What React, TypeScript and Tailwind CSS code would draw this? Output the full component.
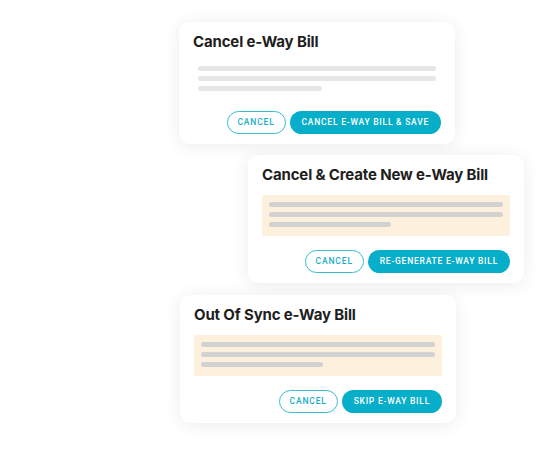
import React from 'react';

type Card = {
  title: string;
  action: string;
  tinted: boolean;
  offset: string;
};

const cards: Card[] = [
  { title: 'Cancel e-Way Bill', action: 'Cancel e-Way Bill & Save', tinted: false, offset: 'ml-[179px] mt-[22px]' },
  { title: 'Cancel & Create New e-Way Bill', action: 'Re-Generate e-Way Bill', tinted: true, offset: 'ml-[248px] mt-[11px]' },
  { title: 'Out Of Sync e-Way Bill', action: 'Skip e-Way Bill', tinted: true, offset: 'ml-[180px] mt-[12px]' },
];

function Lines({ tinted }: { tinted: boolean }) {
  const bar = tinted ? 'bg-[#d2d2d2]' : 'bg-[#e6e6e6]';
  return (
    <div className="flex flex-col gap-[5px]">
      <div className={`h-[5px] rounded-full ${bar}`} />
      <div className={`h-[5px] rounded-full ${bar}`} />
      <div className={`h-[5px] w-[52%] rounded-full ${bar}`} />
    </div>
  );
}

function BillCard({ card }: { card: Card }) {
  return (
    <div
      className={`${card.offset} flex w-[276px] flex-col rounded-[10px] bg-white px-[14px] pt-[11px] pb-[10px] shadow-[0_2px_18px_rgba(0,0,0,0.08)]`}
    >
      <h3 className="text-[15px] leading-[18px] font-bold tracking-[-0.01em] text-[#1e1e1e]">{card.title}</h3>
      {card.tinted ? (
        <div className="mt-[11px] h-[41px] rounded-[2px] bg-[#fdf0dc] px-[7px] pt-[7px]">
          <Lines tinted />
        </div>
      ) : (
        <div className="mt-[15px] h-[25px] px-[5px]">
          <Lines tinted={false} />
        </div>
      )}
      <div className={`${card.tinted ? 'mt-[14px]' : 'mt-[20px]'} flex justify-end gap-[4px] font-['Roboto',sans-serif]`}>
        <button className="h-[23px] w-[59px] rounded-full border border-[#34bdd3] text-[8.5px] font-medium tracking-[0.1em] text-[#1aaec6] uppercase">
          Cancel
        </button>
        <button className="h-[23px] rounded-full bg-[#06aec9] px-[12px] text-[8.5px] font-medium tracking-[0.09em] text-white uppercase">
          {card.action}
        </button>
      </div>
    </div>
  );
}

export default function App() {
  return (
    <div className="flex h-[453px] w-[549px] flex-col bg-white font-['Inter',sans-serif]">
      {cards.map((c) => (
        <BillCard key={c.title} card={c} />
      ))}
    </div>
  );
}
